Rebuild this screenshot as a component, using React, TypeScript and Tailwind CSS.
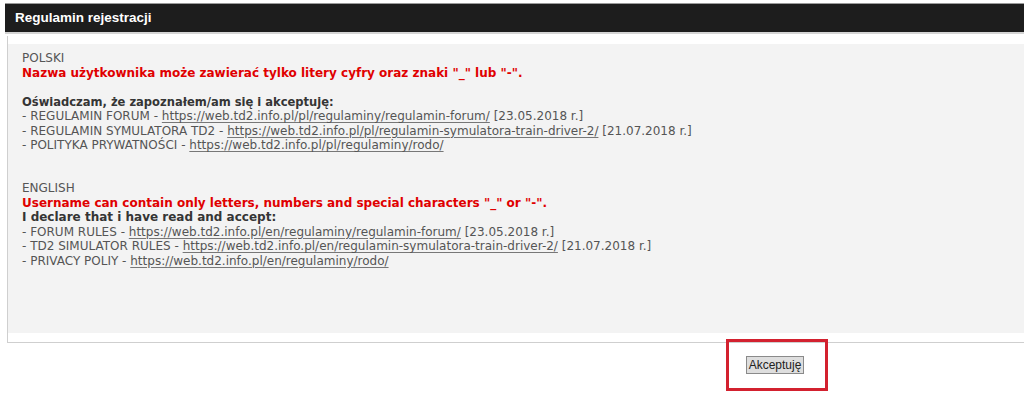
import React from "react"

const links = {
  pl: [
    { label: "REGULAMIN FORUM", url: "https://web.td2.info.pl/pl/regulaminy/regulamin-forum/", date: "[23.05.2018 r.]" },
    { label: "REGULAMIN SYMULATORA TD2", url: "https://web.td2.info.pl/pl/regulamin-symulatora-train-driver-2/", date: "[21.07.2018 r.]" },
    { label: "POLITYKA PRYWATNOŚCI", url: "https://web.td2.info.pl/pl/regulaminy/rodo/", date: "" },
  ],
  en: [
    { label: "FORUM RULES", url: "https://web.td2.info.pl/en/regulaminy/regulamin-forum/", date: "[23.05.2018 r.]" },
    { label: "TD2 SIMULATOR RULES", url: "https://web.td2.info.pl/en/regulamin-symulatora-train-driver-2/", date: "[21.07.2018 r.]" },
    { label: "PRIVACY POLIY", url: "https://web.td2.info.pl/en/regulaminy/rodo/", date: "" },
  ],
}

function RuleLine({ label, url, date }: { label: string; url: string; date: string }) {
  return (
    <div>
      - {label} -{" "}
      <a href="#" className="text-[#555] underline decoration-[#777] underline-offset-2">
        {url}
      </a>
      {date ? " " + date : ""}
    </div>
  )
}

export default function App() {
  return (
    <div className="w-[1024px] h-[419px] bg-white pt-[3px] overflow-hidden">
      {/* header bar */}
      <div className="ml-[5px] h-[31px] border-t border-t-[#9a9a9a] border-b-2 border-b-[#d4d4d4] bg-[#1d1d1d] flex items-center pl-[10px]">
        <span className="text-white font-bold text-[13.5px] font-['Liberation_Sans',Arial,sans-serif]">
          Regulamin rejestracji
        </span>
      </div>

      {/* terms panel */}
      <div className="ml-[7px] mt-[2px] border-l border-b border-[#cfcfcf] pt-[8px] pb-[9px]">
        <div className="bg-[#f3f3f3] h-[289px] pl-[14px] pt-[7px] text-[12px] leading-[14.5px] text-[#555] font-['DejaVu_Sans',Verdana,sans-serif]">
          <div>POLSKI</div>
          <div className="font-bold text-[#e00000]">
            Nazwa użytkownika może zawierać tylko litery cyfry oraz znaki "_" lub "-".
          </div>
          <div className="h-[14.5px]" />
          <div className="font-bold text-[#353535] text-[12.8px] font-['DejaVu_Sans_Condensed','DejaVu_Sans',sans-serif]">
            Oświadczam, że zapoznałem/am się i akceptuję:
          </div>
          {links.pl.map((l) => (
            <RuleLine key={l.url} {...l} />
          ))}
          <div className="h-[28.5px]" />
          <div>ENGLISH</div>
          <div className="font-bold text-[#e00000]">
            Username can contain only letters, numbers and special characters "_" or "-".
          </div>
          <div className="font-bold text-[#353535]">I declare that i have read and accept:</div>
          {links.en.map((l) => (
            <RuleLine key={l.url} {...l} />
          ))}
        </div>
      </div>

      {/* accept button, highlighted */}
      <div className="ml-[726px] -mt-[4px] w-[102px] h-[52px] border-[3px] border-[#d3212f] flex items-center justify-center pr-[4px]">
        <button className="h-[18px] px-[2px] bg-[#dedede] border border-[#8a8a8a] text-[12px] leading-none text-[#222] font-['Liberation_Sans',Arial,sans-serif]">
          Akceptuję
        </button>
      </div>
    </div>
  )
}
